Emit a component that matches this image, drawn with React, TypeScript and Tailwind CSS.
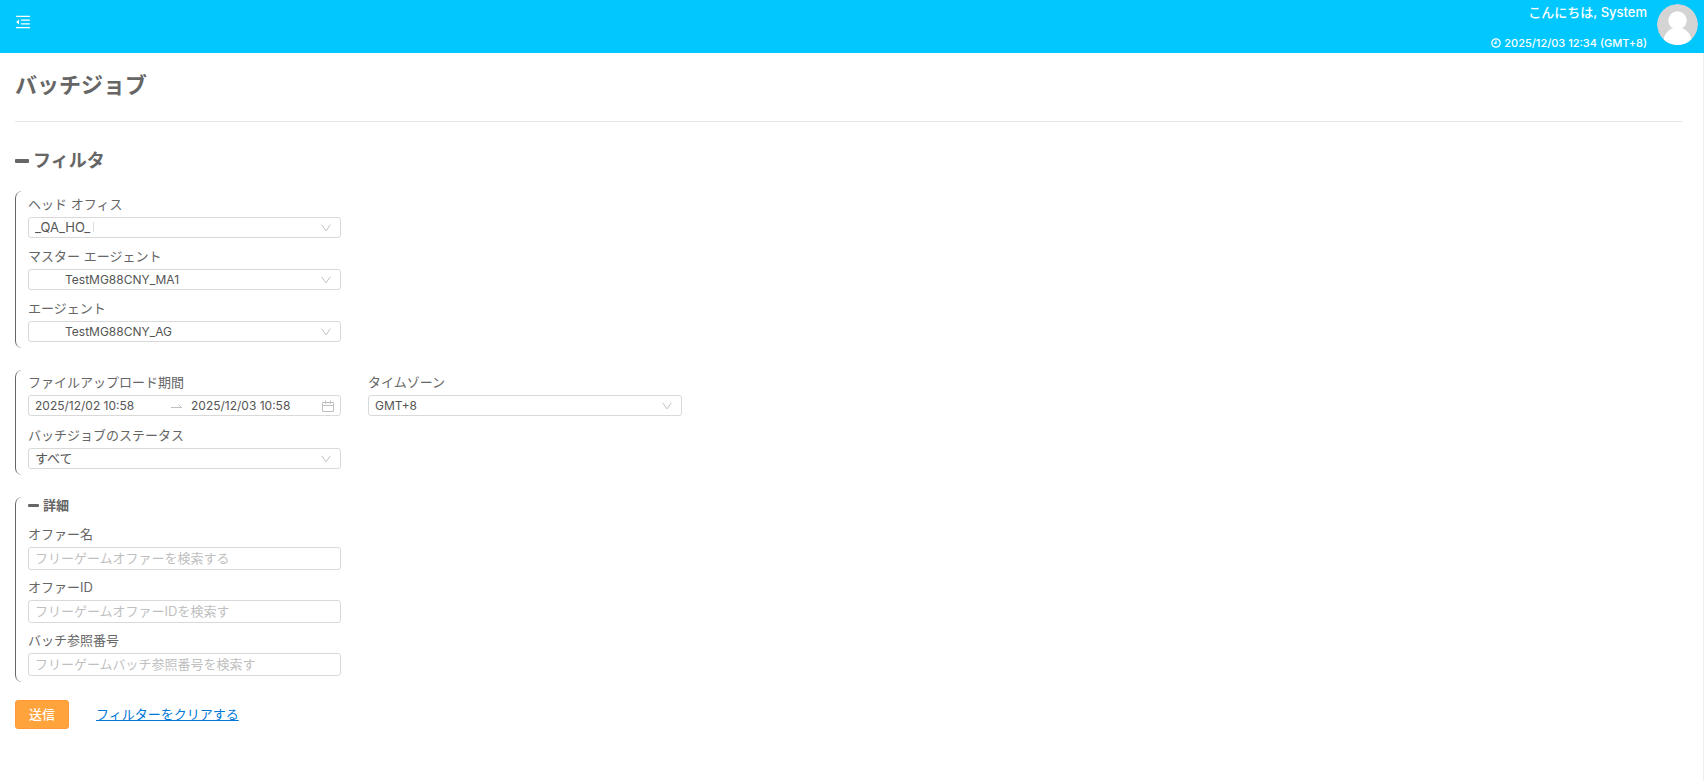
import React from "react";
import { AiOutlineMenuFold } from "react-icons/ai";

interface fieldProps {
  id: string;
  label: string;
  children: React.ReactNode;
}

function Field({ id, label, children }: fieldProps) {
  return (
    <div className="flex flex-col">
      <label htmlFor={id} className="h-[25px] leading-6">
        {label}
      </label>
      {children}
    </div>
  );
}

interface selectProps {
  id: string;
  label: string;
  value: string;
  className?: string;
  caret?: boolean;
}

function SelectField({ id, label, value, className = "pl-[6px]", caret }: selectProps) {
  return (
    <Field id={id} label={label}>
      <div className="relative">
        <select
          id={id}
          className={
            "block h-[21px] w-full appearance-none rounded-[3px] border border-[#d9d9d9] bg-white pr-8 leading-[19px] text-[#555] " +
            className
          }
        >
          <option>{value}</option>
        </select>
        {caret && <span className="absolute left-[65px] top-[5px] h-[10px] w-px bg-[#ddd]" />}
        <svg className="pointer-events-none absolute right-[10px] top-[6px] h-[10px] w-[10px]" viewBox="0 0 10 10" fill="none" stroke="#bfbfbf">
          <path d="M0.7 1.8 L5 7.9 L9.3 1.8" />
        </svg>
      </div>
    </Field>
  );
}

interface inputProps {
  id: string;
  label: string;
  placeholder: string;
}

function InputField({ id, label, placeholder }: inputProps) {
  return (
    <Field id={id} label={label}>
      <input
        id={id}
        type="text"
        placeholder={placeholder}
        className="h-[23px] w-full rounded-[3px] border border-[#d9d9d9] bg-white px-[6px] pb-[2px] text-[#555] placeholder:text-[#bfbfbf]"
      />
    </Field>
  );
}

function Group({ children }: { children: React.ReactNode }) {
  return (
    <section className="relative flex flex-col pl-[13px] before:absolute before:inset-y-0 before:left-0 before:w-2 before:rounded-l-[7px] before:border-l before:border-[#666]">
      {children}
    </section>
  );
}

function App() {
  return (
    <div className="min-h-screen border-r border-[#eee] bg-white font-['Inter','Noto_Sans_CJK_JP',sans-serif] text-[13px] text-[#666]">
      <header className="-mr-px flex h-[53px] justify-between bg-[#00c8ff] text-white">
        <button type="button" aria-label="メニュー" className="ml-[14px] mt-[13px] h-[18px] w-[18px]">
          <AiOutlineMenuFold className="h-[18px] w-[18px]" />
        </button>
        <div className="flex gap-[10px] pr-[6px]">
          <div className="flex flex-col items-end justify-between pt-[2px] font-medium">
            <span className="leading-5">こんにちは, System</span>
            <span className="flex items-center gap-[3px] text-[11px] leading-5">
              <svg className="h-[10px] w-[10px]" viewBox="0 0 10 10" fill="none" stroke="currentColor" strokeWidth="1.2">
                <circle cx="5" cy="5" r="4.2" />
                <path d="M5 2.4 V5.4 H3" />
              </svg>
              2025/12/03 12:34 (GMT+8)
            </span>
          </div>
          <svg className="mt-1 h-[41px] w-[41px] rounded-full" viewBox="0 0 41 41">
            <circle cx="20.5" cy="20.5" r="20.5" fill="#d4d4d4" />
            <circle cx="20.5" cy="16.5" r="9.2" fill="#fff" />
            <path d="M6.5 36 C8 29 11 26.5 15 24.5 H26 C30 26.5 33 29 34.5 36 C31 40 26 41 20.5 41 C15 41 10 40 6.5 36 Z" fill="#fff" />
          </svg>
        </div>
      </header>

      <main className="pl-[15px] pr-[21px]">
        <h1 className="border-b border-[#e5e5e5] pb-5 pt-4 text-[22px] font-bold leading-8">バッチジョブ</h1>

        <h2 className="mt-[27px] text-[18px] font-bold leading-6">
          <button type="button" className="flex items-center gap-1">
            <span className="h-1 w-[14px] rounded-[1px] bg-[#666]" />
            フィルタ
          </button>
        </h2>

        <form className="mt-[18px] flex flex-col gap-[22px]" onSubmit={(e) => e.preventDefault()}>
          <div className="grid grid-cols-[326px]">
            <Group>
              <div className="flex flex-col gap-[6px] pb-[6px] pt-px">
                <SelectField id="ho" label="ヘッド オフィス" value="_QA_HO_" caret />
                <SelectField id="ma" label="マスター エージェント" value="TestMG88CNY_MA1" className="pl-9 text-[12px]" />
                <SelectField id="ag" label="エージェント" value="TestMG88CNY_AG" className="pl-9 text-[12px]" />
              </div>
            </Group>
          </div>

          <div className="grid grid-cols-[326px_314px] gap-[27px]">
            <Group>
              <div className="flex flex-col gap-[7px] pb-[6px]">
                <Field id="from" label="ファイルアップロード期間">
                  <div className="flex h-[21px] items-center rounded-[3px] border border-[#d9d9d9] px-[6px] text-[12px] text-[#555]">
                    <input id="from" type="text" defaultValue="2025/12/02 10:58" className="w-[136px] leading-[19px]" />
                    <svg className="h-[10px] w-[11px] shrink-0" viewBox="0 0 11 10" fill="none" stroke="#bfbfbf">
                      <path d="M0 6.5 H10.5 L7.5 3.5" />
                    </svg>
                    <input type="text" aria-label="終了日時" defaultValue="2025/12/03 10:58" className="ml-[9px] w-[125px] leading-[19px]" />
                    <svg className="ml-auto h-3 w-3 shrink-0" viewBox="0 0 12 12" fill="none" stroke="#bfbfbf">
                      <path d="M0.5 2.5 H11.5 V11.5 H0.5 Z M0.5 5.5 H11.5 M3.5 0.5 V4 M8.5 0.5 V4" />
                    </svg>
                  </div>
                </Field>
                <SelectField id="status" label="バッチジョブのステータス" value="すべて" />
              </div>
            </Group>
            <SelectField id="tz" label="タイムゾーン" value="GMT+8" className="pl-[6px] text-[12px]" />
          </div>

          <div className="grid grid-cols-[326px]">
            <Group>
              <h3 className="font-bold leading-4">
                <button type="button" className="flex items-center gap-1">
                  <span className="h-[3px] w-[11px] rounded-[1px] bg-[#666]" />
                  詳細
                </button>
              </h3>
              <div className="flex flex-col gap-[5px] pb-[6px] pt-[9px]">
                <InputField id="offer-name" label="オファー名" placeholder="フリーゲームオファーを検索する" />
                <InputField id="offer-id" label="オファーID" placeholder="フリーゲームオファーIDを検索す" />
                <InputField id="batch-ref" label="バッチ参照番号" placeholder="フリーゲームバッチ参照番号を検索す" />
              </div>
            </Group>
          </div>

          <div className="-mt-1 flex items-center gap-[27px]">
            <button type="submit" className="h-[29px] w-[54px] rounded-[3px] border border-[#ff9933] bg-[#ffa33c] font-medium text-white">
              送信
            </button>
            <a href="#" className="text-[#0078d7] underline">
              フィルターをクリアする
            </a>
          </div>
        </form>
      </main>
    </div>
  );
}

export default App;
